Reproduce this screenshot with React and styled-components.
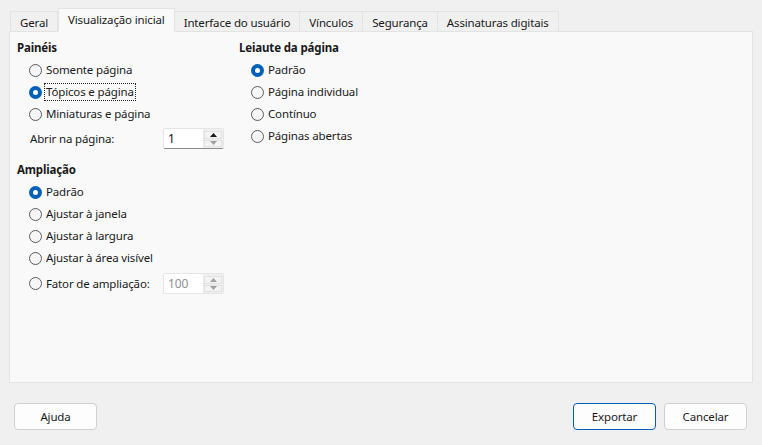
import React from "react";
import styled, { createGlobalStyle } from "styled-components";

const GlobalStyle = createGlobalStyle`
  html, body {
    margin: 0;
    padding: 0;
    background: #f0f0f0;
  }
  body {
    font-family: "Noto Sans", "Open Sans", sans-serif;
    font-size: 11.5px;
    letter-spacing: -0.15px;
    color: #1a1a1a;
  }
`;

const Dialog = styled.div`
  width: 762px;
  height: 445px;
  display: flex;
  flex-direction: column;
  box-sizing: border-box;
  padding: 8px 9px 0 9px;
  background: #f0f0f0;
`;

const TabBar = styled.div`
  display: flex;
  align-items: flex-end;
  height: 23px;
  padding-left: 1px;
  position: relative;
  z-index: 1;
`;

const Tab = styled.div`
  box-sizing: border-box;
  height: ${(p) => (p.$active ? "24px" : "21px")};
  margin-bottom: -1px;
  padding: 0 9px;
  display: flex;
  align-items: center;
  padding-bottom: ${(p) => (p.$active ? "1px" : "0")};
  padding-top: ${(p) => (p.$active ? "0" : "1px")};
  border: 1px solid #e3e3e3;
  border-bottom: ${(p) => (p.$active ? "1px solid #f9f9f9" : "1px solid #e3e3e3")};
  border-left: ${(p) => (p.$first || p.$active ? "1px solid #e3e3e3" : "none")};
  background: ${(p) => (p.$active ? "#f9f9f9" : "#f0f0f0")};
  white-space: nowrap;
  color: #1a1a1a;
`;

const Panel = styled.div`
  box-sizing: border-box;
  height: 352px;
  border: 1px solid #e3e3e3;
  background: #f9f9f9;
  display: flex;
  padding: 8px 0 0 7px;
`;

const Column = styled.div`
  display: flex;
  flex-direction: column;
  width: ${(p) => p.$width};
`;

const Heading = styled.div`
  font-weight: 700;
  line-height: 16px;
  height: 16px;
  margin-top: ${(p) => p.$top || "0"};
  margin-bottom: 3px;
`;

const RadioRow = styled.label`
  display: flex;
  align-items: center;
  height: 22px;
  padding-left: 12px;
  gap: 4px;
`;

const Circle = styled.span`
  box-sizing: border-box;
  width: 13px;
  height: 13px;
  border-radius: 50%;
  flex: none;
  border: ${(p) => (p.$checked ? "none" : "1px solid #5c5c5c")};
  background: ${(p) => (p.$checked ? "#005fb8" : "#f6f6f6")};
  display: flex;
  align-items: center;
  justify-content: center;
  &::after {
    content: "";
    display: ${(p) => (p.$checked ? "block" : "none")};
    width: 5px;
    height: 5px;
    border-radius: 50%;
    background: #ffffff;
  }
`;

const Label = styled.span`
  line-height: 16px;
  padding: 0 1px;
  margin-left: -1px;
  outline: ${(p) => (p.$focus ? "1px dotted #222" : "none")};
  outline-offset: 0;
  color: ${(p) => (p.$disabled ? "#8a8a8a" : "#1a1a1a")};
`;

const FieldRow = styled.div`
  display: flex;
  align-items: center;
  height: 21px;
  margin-top: ${(p) => p.$top};
  padding-left: ${(p) => p.$indent};
`;

const FieldLabel = styled.span`
  width: ${(p) => p.$width};
  display: flex;
  align-items: center;
  gap: 4px;
`;

const Spin = styled.div`
  box-sizing: border-box;
  width: 61px;
  height: 21px;
  display: flex;
  background: #ffffff;
  border: 1px solid #e5e5e5;
  border-bottom: 1px solid ${(p) => (p.$disabled ? "#e5e5e5" : "#8a8a8a")};
  border-radius: 2px;
`;

const SpinValue = styled.span`
  flex: 1;
  padding-left: 4px;
  line-height: 19px;
  font-size: 12px;
  color: ${(p) => (p.$disabled ? "#8f8f8f" : "#111")};
`;

const SpinButtons = styled.div`
  width: 18px;
  display: flex;
  flex-direction: column;
  gap: 1px;
  padding: 2px 1px 1px 0;
  background: #f0f0f0;
  border-left: 1px solid #ececec;
`;

const SpinButton = styled.div`
  flex: 1;
  display: flex;
  align-items: center;
  justify-content: center;
  background: #f3f3f3;
  border: 1px solid #e2e2e2;
  svg {
    display: block;
  }
`;

const Footer = styled.div`
  flex: 1;
  display: flex;
  align-items: flex-start;
  padding: 20px 6px 0 5px;
  gap: 8px;
`;

const Spacer = styled.div`
  flex: 1;
`;

const Button = styled.button`
  box-sizing: border-box;
  width: 83px;
  height: 27px;
  border-radius: 4px;
  background: #fdfdfd;
  border: 1px solid ${(p) => (p.$default ? "#005fb8" : "#d0d0d0")};
  font-family: inherit;
  font-size: 11.5px;
  letter-spacing: -0.15px;
  color: #1a1a1a;
  padding: 0;
`;

const Arrow = ({ up, disabled }) => (
  <svg width="7" height="4" viewBox="0 0 7 4">
    <path
      d={up ? "M0 4 L3.5 0 L7 4 Z" : "M0 0 L3.5 4 L7 0 Z"}
      fill={disabled ? "#a0a0a0" : "#1a1a1a"}
    />
  </svg>
);

const Radio = ({ label, checked, focus }) => (
  <RadioRow>
    <Circle $checked={checked} />
    <Label $focus={focus}>{label}</Label>
  </RadioRow>
);

const SpinBox = ({ value, disabled, upDisabled, downDisabled }) => (
  <Spin $disabled={disabled}>
    <SpinValue $disabled={disabled}>{value}</SpinValue>
    <SpinButtons>
      <SpinButton>
        <Arrow up disabled={disabled || upDisabled} />
      </SpinButton>
      <SpinButton>
        <Arrow disabled={disabled || downDisabled} />
      </SpinButton>
    </SpinButtons>
  </Spin>
);

const tabs = [
  "Geral",
  "Visualização inicial",
  "Interface do usuário",
  "Vínculos",
  "Segurança",
  "Assinaturas digitais",
];

export default function App() {
  return (
    <Dialog>
      <GlobalStyle />
      <TabBar>
        {tabs.map((t, i) => (
          <Tab key={t} $active={i === 1} $first={i === 0}>
            {t}
          </Tab>
        ))}
      </TabBar>
      <Panel>
        <Column $width="222px">
          <Heading>Painéis</Heading>
          <Radio label="Somente página" />
          <Radio label="Tópicos e página" checked focus />
          <Radio label="Miniaturas e página" />
          <FieldRow $top="3px" $indent="13px">
            <FieldLabel $width="133px">Abrir na página:</FieldLabel>
            <SpinBox value="1" downDisabled />
          </FieldRow>
          <Heading $top="13px">Ampliação</Heading>
          <Radio label="Padrão" checked />
          <Radio label="Ajustar à janela" />
          <Radio label="Ajustar à largura" />
          <Radio label="Ajustar à área visível" />
          <FieldRow $top="4px" $indent="12px">
            <FieldLabel $width="134px">
              <Circle />
              Fator de ampliação:
            </FieldLabel>
            <SpinBox value="100" disabled />
          </FieldRow>
        </Column>
        <Column $width="240px">
          <Heading>Leiaute da página</Heading>
          <Radio label="Padrão" checked />
          <Radio label="Página individual" />
          <Radio label="Contínuo" />
          <Radio label="Páginas abertas" />
        </Column>
      </Panel>
      <Footer>
        <Button>Ajuda</Button>
        <Spacer />
        <Button $default>Exportar</Button>
        <Button>Cancelar</Button>
      </Footer>
    </Dialog>
  );
}
